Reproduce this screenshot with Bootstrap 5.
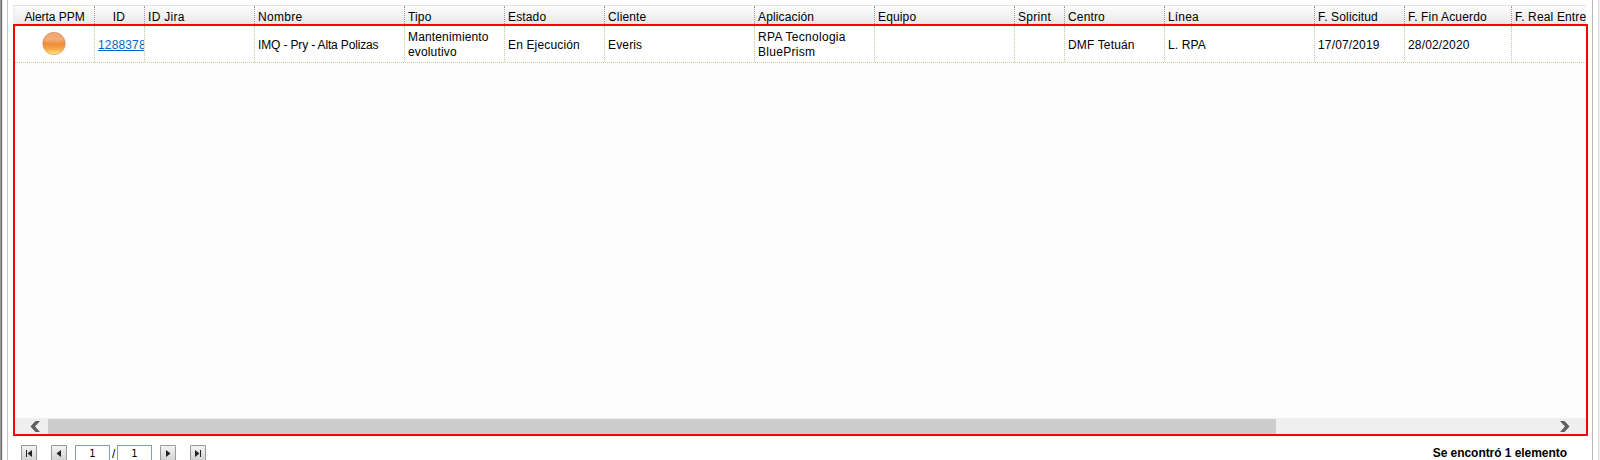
<!DOCTYPE html>
<html lang="es">
<head>
<meta charset="utf-8">
<title>Peticiones</title>
<link href="https://cdn.jsdelivr.net/npm/bootstrap@5.3.0/dist/css/bootstrap.min.css" rel="stylesheet">
<style>
body{width:1600px;height:460px;font:12px/15px "Liberation Sans",Arial,sans-serif;color:#000;background:#fff;letter-spacing:.15px}
.edge-l{width:8px;background:linear-gradient(90deg,#999 0 1px,#707070 1px 2px,#e6e6e6 2px 3px,#fff 3px 7px,#c4c4c4 7px)}
.edge-r{width:8px;background:linear-gradient(90deg,#b9b9b9 0 1px,#fff 1px 6px,#ddd 6px 7px,#f0f0f0 7px)}
.main{width:1584px;padding:5px 4px 0 5px}
.grid-line{display:grid;grid-template-columns:80px 50px 110px 150px 100px 100px 150px 120px 140px 50px 100px 150px 90px 107px 74px;white-space:nowrap}
.grid-line>div{border-right:1px dotted #c9c4a2;padding:0 3px;overflow:hidden;display:flex;align-items:center}
.grid-line>div:last-child{border-right:0}
.heads{height:19px;border-top:1px solid #e3e3e3;border-left:2px solid #eee;background:linear-gradient(#fdfdfd,#e8e8e8);width:1573px}
.heads>div{border-color:#999!important;padding-top:5px!important}
.box-red{height:412px;border:2px solid #f00;background:#fdfdfd}
.values{height:37px;background:#fff;border-bottom:1px dotted #c9c4a2}
.values>div{padding-top:2px}
.values>.two{padding-top:1px}
.values a{color:#0068d0;text-decoration-color:#0068d0;text-underline-offset:1px}
.tight{letter-spacing:-.15px}
.wide{letter-spacing:.3px}
.even{letter-spacing:-.05px}
.hbar{height:16px;background:#efefef;padding-top:1px}
.thumb{width:1228px;background:#cdcdcd}
.pbtn{width:16px;height:16px;border:1px solid #999;border-radius:1px;background:linear-gradient(#f3f3f3,#d4d4d4);padding:0}
.pbtn svg{display:block}
.pg{width:35px;height:18px;border:1px solid #7f9db9;font:10px/15px "DejaVu Sans",sans-serif;text-align:center;letter-spacing:0;background:#fff}
.pager{padding:9px 0 0 8px}
.found{padding:10px 21px 0 0;letter-spacing:-.05px}
</style>
</head>
<body class="d-flex overflow-hidden">
<div class="edge-l"></div>
<main class="main">
<div class="grid-line heads overflow-hidden">
<div class="justify-content-center even">Alerta PPM</div><div class="justify-content-center pe-1">ID</div><div class="wide">ID Jira</div><div class="wide">Nombre</div><div>Tipo</div><div>Estado</div><div>Cliente</div><div>Aplicación</div><div>Equipo</div><div class="wide">Sprint</div><div>Centro</div><div>Línea</div><div>F. Solicitud</div><div>F. Fin Acuerdo</div><div class="pe-0">F. Real Entrega</div>
</div>
<div class="box-red d-flex flex-column overflow-hidden">
<div class="grid-line values">
<div class="align-items-start justify-content-center pt-1 pe-1"><svg width="24" height="26" viewBox="0 0 24 26"><defs><linearGradient id="o" x2="0" y2="1"><stop stop-color="#ef9a5c"/><stop offset=".3" stop-color="#f3a063"/><stop offset=".5" stop-color="#ef8939"/><stop offset=".75" stop-color="#f6a94a"/><stop offset="1" stop-color="#ffef8c"/></linearGradient></defs><circle cx="12" cy="13.500" r="11.200" fill="url(#o)" stroke="#cf8a5c" stroke-width=".6"/><path d="M2.500 12A9.500 9.500 0 0 1 21.500 12Q12 15 2.500 12Z" fill="#fff" opacity=".12"/></svg></div><div class="pe-0"><a href="#">1288378</a></div><div></div><div class="tight">IMQ - Pry - Alta Polizas</div><div class="two">Mantenimiento<br>evolutivo</div><div>En Ejecución</div><div>Everis</div><div class="wide two">RPA Tecnologia<br>BluePrism</div><div></div><div></div><div>DMF Tetuán</div><div>L. RPA</div><div>17/07/2019</div><div>28/02/2020</div><div></div>
</div>
<div class="hbar d-flex mt-auto">
<svg width="33" height="15"><path d="M25 2H20.500L15.500 7.500 20.500 13H25L20 7.500Z" fill="#606060"/></svg>
<div class="thumb"></div>
<svg class="ms-auto" width="32" height="15"><path d="M6 2H10.500L15.500 7.500 10.500 13H6L11 7.500Z" fill="#606060"/></svg>
</div>
</div>
<footer class="d-flex align-items-start">
<div class="d-flex pager">
<button class="pbtn"><svg width="14" height="14"><path d="M4 4H5V11H4ZM10 4V11L5.500 7.500Z" fill="#222"/></svg></button>
<button class="pbtn" style="margin-left:14px"><svg width="14" height="14"><path d="M9 4V11L4.500 7.500Z" fill="#222"/></svg></button>
<div class="pg" style="margin-left:8px">1</div><span style="width:7px;padding:2px 0 0 2px">/</span><div class="pg">1</div>
<button class="pbtn" style="margin-left:8px"><svg width="14" height="14"><path d="M5 4V11L9.500 7.500Z" fill="#222"/></svg></button>
<button class="pbtn" style="margin-left:14px"><svg width="14" height="14"><path d="M9 4H10V11H9ZM4 4V11L8.500 7.500Z" fill="#222"/></svg></button>
</div>
<strong class="ms-auto found">Se encontró 1 elemento</strong>
</footer>
</main>
<div class="edge-r"></div>
<script src="https://cdn.jsdelivr.net/npm/bootstrap@5.3.0/dist/js/bootstrap.bundle.min.js"></script>
</body>
</html>
